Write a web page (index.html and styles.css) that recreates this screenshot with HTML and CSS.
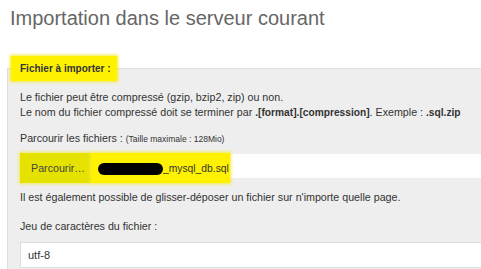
FILE: index.html
```html
<!DOCTYPE html>
<html lang="fr">
<head>
    <meta charset="UTF-8">
    <title>Importation</title>
    <link rel="stylesheet" href="styles.css">
</head>
<body>
    <h2>Importation dans le serveur courant</h2>

    <fieldset class="import-box">
        <legend class="mark">Fichier à importer :</legend>

        <p>Le fichier peut être compressé (gzip, bzip2, zip) ou non.<br>
        Le nom du fichier compressé doit se terminer par <b>.[format].[compression]</b>. Exemple : <b>.sql.zip</b></p>

        <p class="browse-label">Parcourir les fichiers : <small>(Taille maximale : 128Mio)</small></p>

        <div class="file-input">
            <span class="browse-btn">Parcourir…</span>
            <span class="file-name"><span class="redacted"></span>_mysql_db.sql</span>
        </div>

        <p class="drop-hint">Il est également possible de glisser-déposer un fichier sur n'importe quelle page.</p>

        <p class="charset-label">Jeu de caractères du fichier :</p>
        <div class="select">utf-8</div>
    </fieldset>
</body>
</html>
```

FILE: styles.css
```css
body {
    font-family: "Liberation Sans", Arial, sans-serif;
    background-color: #ffffff;
    color: #333333;
    margin: 0;
    overflow: hidden;
}
h2 {
    margin: 0;
    padding: 6px 0 0 10px;
    font-size: 20px;
    line-height: 24px;
    font-weight: normal;
    color: #666666;
}
.import-box {
    margin: 26px -40px 0 7px;
    padding: 0 0 20px 12px;
    border: 1px solid #dddddd;
    background-color: #eeeeee;
    font-size: 10.7px;
    line-height: 15px;
}
.import-box b {
    font-size: 10.2px;
}
.mark {
    background-color: #fff200;
    box-shadow: 0 0 3px 1px #f4ec40;
}
legend.mark {
    margin-left: -9px;
    padding: 6px 6px 6px 9px;
    font-weight: bold;
    font-size: 10px;
    line-height: 13px;
    color: #333333;
}
p {
    margin: 0;
}
.import-box > p:first-of-type {
    margin-top: 9px;
}
.browse-label {
    margin-top: 11px;
}
.browse-label small {
    font-size: 8.5px;
}
.file-input {
    display: flex;
    margin-top: 7px;
    height: 24px;
    background-color: #ffffff;
}
.browse-btn {
    display: flex;
    align-items: center;
    padding: 0 0 0 11px;
    width: 60px;
    margin: -1px 0 -5px 0;
    background-color: #e6e200;
    box-shadow: 0 0 3px 1px #eeea60;
    color: #444444;
}
.file-name {
    display: flex;
    align-items: center;
    margin: -1px 0 -5px 0;
    padding: 0 1px 0 7px;
    background-color: #fff200;
    box-shadow: 0 0 3px 1px #f4ec40;
    font-size: 10.3px;
    color: #333333;
}
.redacted {
    flex-shrink: 0;
    width: 65px;
    height: 12px;
    background-color: #000000;
    border-radius: 6px;
    margin-top: 1px;
}
.drop-hint {
    margin-top: 12px;
}
.charset-label {
    margin-top: 14px;
}
.select {
    margin-top: 8px;
    height: 24px;
    line-height: 24px;
    padding-left: 7px;
    background-color: #ffffff;
    border: 1px solid #dddddd;
    border-right: none;
    font-size: 11px;
}
```
